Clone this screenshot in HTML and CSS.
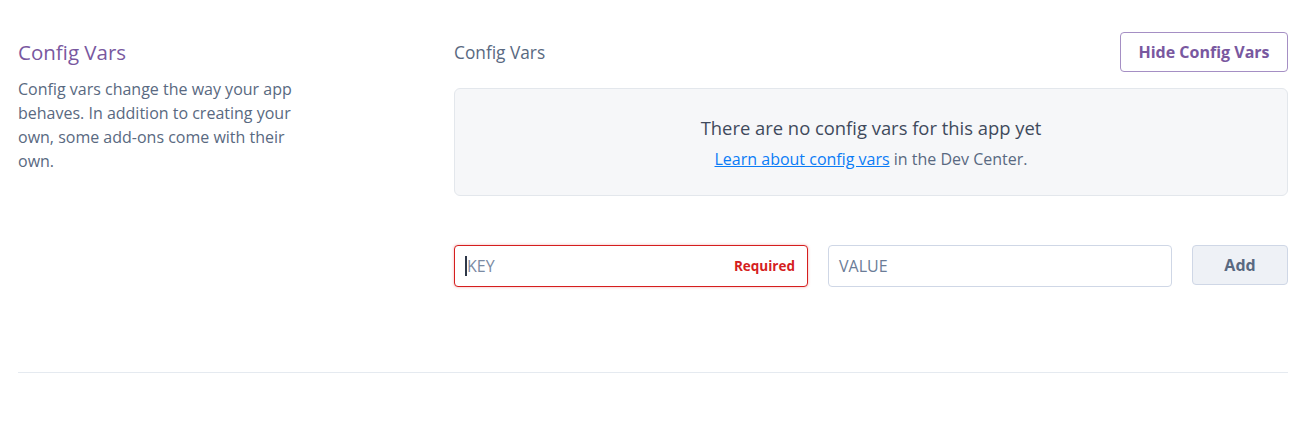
FILE: index.html
```html
<!DOCTYPE html>
<html>
<head>
<meta charset="utf-8">
<link rel="stylesheet" href="styles.css">
</head>
<body>
<div class="page">
  <section class="section">
    <div class="intro">
      <h2 class="intro-title">Config Vars</h2>
      <p class="intro-text">Config vars change the way your app behaves. In addition to creating your own, some add-ons come with their own.</p>
    </div>
    <div class="main">
      <div class="main-head">
        <h3 class="main-title">Config Vars</h3>
        <button class="btn-outline">Hide Config Vars</button>
      </div>
      <div class="empty">
        <div class="empty-title">There are no config vars for this app yet</div>
        <div class="empty-sub"><a href="#" class="link">Learn about config vars</a> in the Dev Center.</div>
      </div>
      <div class="form-row">
        <div class="field field-error">
          <span class="caret"></span>
          <span class="placeholder">KEY</span>
          <span class="required">Required</span>
        </div>
        <div class="field">
          <span class="placeholder">VALUE</span>
        </div>
        <button class="btn-add">Add</button>
      </div>
    </div>
  </section>
  <hr class="divider">
</div>
</body>
</html>
```
FILE: styles.css
```css
* { box-sizing: border-box; }
html, body { margin: 0; padding: 0; background: #fff; }
body { font-family: "Open Sans", "Noto Sans", sans-serif; color: #3f3f44; }
.page { padding: 32px 25px 0 18px; }
.section { display: flex; }
.intro { width: 436px; flex: none; padding-top: 6px; }
.intro-title { margin: 0; font-size: 20.5px; font-weight: 400; color: #79589f; line-height: 28px; }
.intro-text { margin: 11px 0 0; width: 285px; font-size: 16px; line-height: 24px; color: #596981; }
.main { flex: 1; }
.main-head { display: flex; justify-content: space-between; align-items: center; height: 40px; }
.main-title { margin: 0; font-size: 17.3px; font-weight: 400; color: #596981; }
.btn-outline { height: 40px; width: 168px; border: 1px solid #a58fc4; border-radius: 4px; background: #fff; color: #79589f; font-family: inherit; font-size: 16px; font-weight: 700; cursor: pointer; }
.empty { margin-top: 16px; height: 108px; background: #f6f7f9; border: 1px solid #e3e7ec; border-radius: 6px; display: flex; flex-direction: column; align-items: center; padding-top: 26px; }
.empty-title { font-size: 18.4px; color: #3f4a5c; line-height: 26px; }
.empty-sub { margin-top: 7px; font-size: 16px; color: #596981; line-height: 22px; }
.link { color: #0b7cf6; text-decoration: underline; }
.form-row { margin-top: 49px; display: flex; align-items: flex-start; gap: 20px; }
.field { position: relative; flex: 1; height: 42px; border: 1px solid #cfd7e6; border-radius: 4px; display: flex; align-items: center; padding: 0 10px; background: #fff; }
.field-error { flex: none; width: 354px; border-color: #d51e1e; box-shadow: 0 0 3px rgba(213, 30, 30, 0.35); }
.caret { width: 2px; height: 20px; background: #2d3748; }
.placeholder { font-size: 16px; color: #6b7c97; }
.field-error .placeholder { color: #7a8aa3; }
.required { margin-left: auto; font-size: 13.5px; font-weight: 700; color: #d51e1e; padding-right: 2px; }
.btn-add { flex: none; width: 96px; height: 40px; background: #eef1f6; border: 1px solid #cfd7e6; border-radius: 4px; color: #596981; font-family: inherit; font-size: 16px; font-weight: 700; }
.divider { margin: 85px 0 0; border: 0; border-top: 1px solid #e5eaf0; }
```
